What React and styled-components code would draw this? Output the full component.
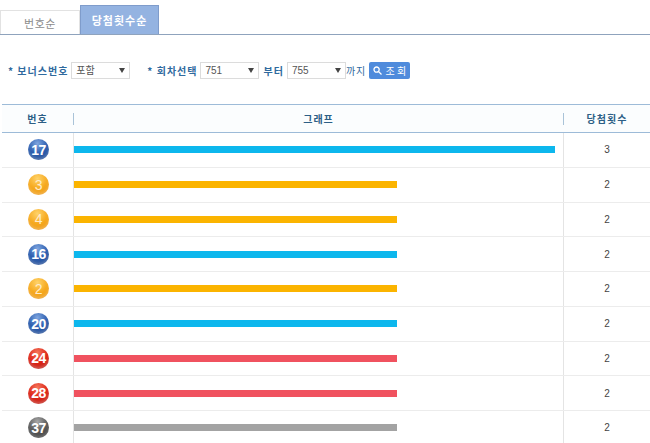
import React from 'react'
import styled, {createGlobalStyle} from 'styled-components'

const rows = [
  {no: 17, color: 'blue', count: 3},
  {no: 3, color: 'yellow', count: 2},
  {no: 4, color: 'yellow', count: 2},
  {no: 16, color: 'blue', count: 2},
  {no: 2, color: 'yellow', count: 2},
  {no: 20, color: 'blue', count: 2},
  {no: 24, color: 'red', count: 2},
  {no: 28, color: 'red', count: 2},
  {no: 37, color: 'gray', count: 2},
]

const ballColors = {
  blue: ['#7fa6e0', '#2a5cae', '#173f86'],
  yellow: ['#ffd36a', '#f6a91e', '#e98f0a'],
  red: ['#f5765c', '#dd2416', '#b01a12'],
  gray: ['#a8a8a8', '#575757', '#2a2a2a'],
}

const barColors = {
  blue: '#0db7ed',
  yellow: '#fbb400',
  red: '#f0525f',
  gray: '#a3a3a3',
}

const GlobalStyle = createGlobalStyle`
  html, body {
    margin: 0;
    padding: 0;
    background: #fff;
    overflow: hidden;
  }
  body {
    font-family: "Noto Sans CJK KR", "Liberation Sans", sans-serif;
  }
`

const Page = styled.div`
  width: 650px;
  height: 443px;
  overflow: hidden;
`

const Tabs = styled.div`
  display: flex;
  align-items: flex-end;
  height: 29px;
  padding-top: 5px;
  border-bottom: 1px solid #8fa3bd;
`

const Tab = styled.div`
  box-sizing: border-box;
  display: flex;
  align-items: center;
  justify-content: center;
  width: ${({active}) => active ? '79px' : '80px'};
  height: ${({active}) => active ? '29px' : '24px'};
  font-size: 11px;
  font-weight: ${({active}) => active ? 700 : 400};
  letter-spacing: ${({active}) => active ? '1px' : '0.5px'};
  color: ${({active}) => active ? '#fff' : '#8c8c8c'};
  background: ${({active}) => active ? '#94b3e1' : '#fff'};
  border: 1px solid ${({active}) => active ? '#7f9ccb' : '#e2e2e2'};
  border-bottom: 0;
`

const Filters = styled.div`
  display: flex;
  align-items: center;
  height: 18px;
  margin-top: 26px;
  padding-left: 8px;
`

const Label = styled.span`
  font-size: 10px;
  font-weight: ${({light}) => light ? 400 : 700};
  letter-spacing: 1px;
  color: #2f6a9e;
  white-space: nowrap;
  margin-left: ${({gap}) => gap || 0}px;
  margin-right: ${({right}) => right || 0}px;
`

const Select = styled.div`
  box-sizing: border-box;
  position: relative;
  width: ${({w}) => w}px;
  height: 17px;
  border: 1px solid #dcdcdc;
  background: #fff;
  font-family: "Liberation Sans", "Noto Sans CJK KR", sans-serif;
  font-size: 10px;
  line-height: 15px;
  color: #555;
  padding-left: 4px;
  &::after {
    content: '';
    position: absolute;
    right: 4px;
    top: 5px;
    border-left: 3px solid transparent;
    border-right: 3px solid transparent;
    border-top: 5px solid #444;
  }
`

const SearchButton = styled.div`
  display: flex;
  align-items: center;
  justify-content: center;
  gap: 3px;
  width: 41px;
  height: 17px;
  margin-left: 3px;
  border-radius: 2px;
  background: #4f8bdc;
  color: #fff;
  font-size: 10px;
  white-space: pre;
`

const Table = styled.div`
  margin: 25px 0 0 2px;
  border-top: 1px solid #9dbbd8;
`

const HeaderRow = styled.div`
  display: grid;
  grid-template-columns: 71px 490px 1fr;
  height: 27px;
  align-items: center;
  background: #fbfdfe;
  border-bottom: 1px solid #9dbbd8;
`

const HeaderCell = styled.div`
  font-size: 10px;
  font-weight: 700;
  letter-spacing: 1px;
  color: #2d5f86;
  text-align: center;
  height: 12px;
  line-height: 12px;
  border-left: ${({divider}) => divider ? '1px solid #a9c3d8' : '0'};
`

const Row = styled.div`
  display: grid;
  grid-template-columns: 71px 490px 1fr;
  height: 33.75px;
  align-items: stretch;
  border-bottom: 1px solid #ececec;
`

const NoCell = styled.div`
  display: flex;
  align-items: center;
  justify-content: center;
  padding-left: 2px;
`

const Ball = styled.div`
  display: flex;
  align-items: center;
  justify-content: center;
  width: 21px;
  height: 21px;
  border-radius: 50%;
  background: radial-gradient(circle at 45% 22%, ${({c}) => ballColors[c][0]} 0%, ${({c}) => ballColors[c][1]} 50%, ${({c}) => ballColors[c][2]} 100%);
  box-shadow: inset 0 -2px 3px rgba(255, 255, 255, 0.25);
  color: ${({c}) => c === 'yellow' ? '#ffeccb' : '#fff'};
  font-family: "Liberation Sans", sans-serif;
  font-size: 14px;
  font-weight: ${({c}) => c === 'yellow' ? 400 : 700};
  letter-spacing: -0.5px;
`

const GraphCell = styled.div`
  display: flex;
  align-items: center;
  border-left: 1px solid #e4e4e4;
`

const Bar = styled.div`
  height: 7px;
  background: ${({c}) => barColors[c]};
`

const CountCell = styled.div`
  display: flex;
  align-items: center;
  justify-content: center;
  border-left: 1px solid #e4e4e4;
  font-family: "Liberation Sans", sans-serif;
  font-size: 10px;
  color: #444;
`

export default function App() {
  return (
    <Page>
      <GlobalStyle />
      <Tabs>
        <Tab>번호순</Tab>
        <Tab active>당첨횟수순</Tab>
      </Tabs>
      <Filters>
        <Label right={3}>* 보너스번호</Label>
        <Select w={59}>포함</Select>
        <Label gap={17} right={3}>* 회차선택</Label>
        <Select w={59}>751</Select>
        <Label gap={4} right={3}>부터</Label>
        <Select w={59}>755</Select>
        <Label light>까지</Label>
        <SearchButton>
          <svg width="9" height="9" viewBox="0 0 9 9" fill="none" stroke="#fff" strokeWidth="1.3">
            <circle cx="3.6" cy="3.6" r="2.6" />
            <path d="M5.5 5.5 L8.5 8.5" />
          </svg>
          조 회
        </SearchButton>
      </Filters>
      <Table>
        <HeaderRow>
          <HeaderCell>번호</HeaderCell>
          <HeaderCell divider>그래프</HeaderCell>
          <HeaderCell divider>당첨횟수</HeaderCell>
        </HeaderRow>
        {rows.map((row) => (
          <Row key={row.no}>
            <NoCell><Ball c={row.color}>{row.no}</Ball></NoCell>
            <GraphCell>
              <Bar c={row.color} style={{width: row.count === 3 ? 481 : 323}} />
            </GraphCell>
            <CountCell>{row.count}</CountCell>
          </Row>
        ))}
      </Table>
    </Page>
  )
}
